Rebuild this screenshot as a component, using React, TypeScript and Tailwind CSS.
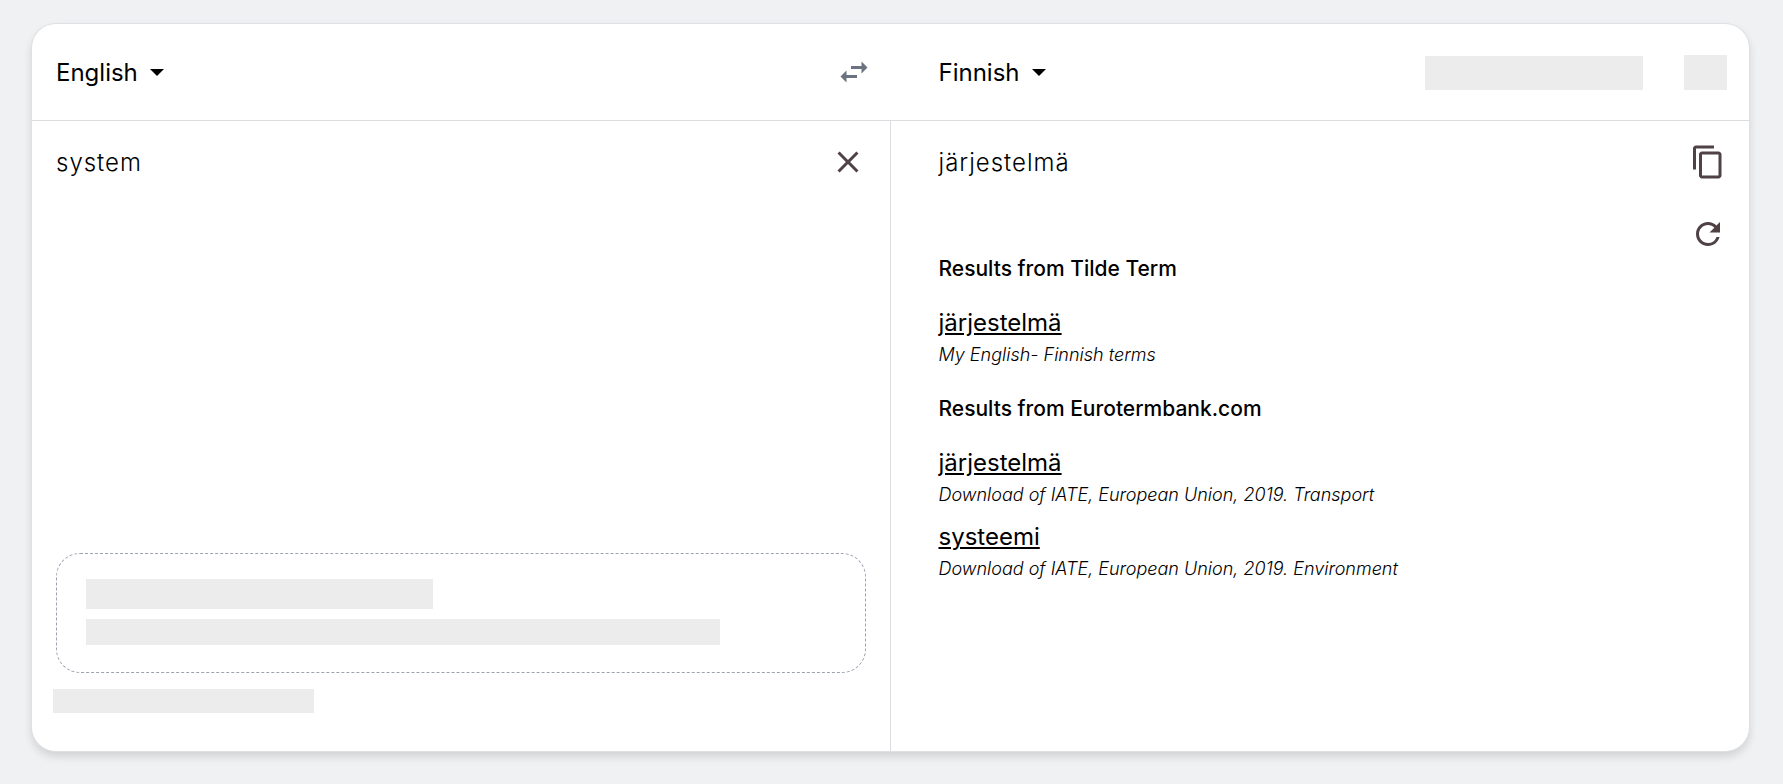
import { MdClose, MdContentCopy, MdRefresh, MdSwapHoriz } from 'react-icons/md';

const languages = ['English', 'Finnish'];

const termGroups = [
  {
    source: 'Tilde Term',
    terms: [{ term: 'järjestelmä', origin: 'My English- Finnish terms' }],
  },
  {
    source: 'Eurotermbank.com',
    terms: [
      { term: 'järjestelmä', origin: 'Download of IATE, European Union, 2019. Transport' },
      { term: 'systeemi', origin: 'Download of IATE, European Union, 2019. Environment' },
    ],
  },
];

function Placeholder({ className }: { className: string }) {
  return <div className={`bg-[#ececec] ${className}`} />;
}

function LanguageSelect({ label, value }: { label: string; value: string }) {
  return (
    <div className="relative flex items-center">
      <select
        aria-label={label}
        defaultValue={value}
        className="appearance-none [field-sizing:content] bg-transparent pt-0.5 pr-[26px] text-2xl text-black outline-none"
      >
        {languages.map((language) => (
          <option key={language}>{language}</option>
        ))}
      </select>
      <svg
        viewBox="0 0 14 7"
        className="absolute right-0 h-[7px] w-3.5 pointer-events-none"
        aria-hidden="true"
      >
        <path d="M0 0h14L7 7z" fill="black" />
      </svg>
    </div>
  );
}

export default function App() {
  return (
    <div className="min-h-screen bg-[#f0f1f3] pt-6 pr-[34px] pb-6 pl-8 font-['Inter',sans-serif] text-black">
      <main className="rounded-3xl bg-white shadow-[0_0_0_1px_#dfe0e3,0_5px_10px_0_rgba(0,0,0,0.14)]">
        {/* Language bar */}
        <header className="grid grid-cols-2 h-[97px] border-b border-[#dcdde0]">
          <div className="flex items-center justify-between pl-6 pr-[19px]">
            <LanguageSelect label="Source language" value="English" />
            <button type="button" aria-label="Swap languages" className="text-[#6b7280]">
              <MdSwapHoriz size={36} />
            </button>
          </div>
          <div className="flex items-center justify-between pl-12 pr-[22px]">
            <LanguageSelect label="Target language" value="Finnish" />
            <div className="flex items-end gap-[41px]">
              <Placeholder className="h-[34px] w-[218px]" />
              <Placeholder className="h-[35px] w-[43px]" />
            </div>
          </div>
        </header>

        <div className="grid grid-cols-2">
          {/* Source text */}
          <section className="flex flex-col border-r border-[#dcdde0] pt-[23px] pr-6 pb-[38px] pl-6">
            <div className="flex items-start">
              <textarea
                aria-label="Source text"
                defaultValue="system"
                rows={1}
                className="grow resize-none bg-transparent text-2xl/[38px] font-light tracking-[1px] outline-none"
              />
              <button type="button" aria-label="Clear text" className="text-[#4f4144]">
                <MdClose size={36} />
              </button>
            </div>

            <div className="mt-auto rounded-3xl border border-dashed border-[#9ca3af] px-[29px] pt-[25px] pb-[27px]">
              <Placeholder className="h-[30px] w-[347px]" />
              <Placeholder className="mt-2.5 h-[26px] w-[634px]" />
            </div>
            <Placeholder className="-ml-[3px] mt-4 h-6 w-[261px]" />
          </section>

          {/* Translation and term results */}
          <section className="flex min-h-[630px] items-start justify-between pt-[23px] pr-[23px] pb-6 pl-12">
            <div>
              <p className="text-2xl/[38px] font-light tracking-[1px]">järjestelmä</p>
              <div className="mt-[73px] space-y-6">
                {termGroups.map((group) => (
                  <div key={group.source}>
                    <h2 className="mb-6 text-[21px]/7 font-medium">Results from {group.source}</h2>
                    <ul className="space-y-2.5">
                      {group.terms.map(({ term, origin }) => (
                        <li key={origin}>
                          <a href="#" className="block w-fit text-2xl/8 underline">
                            {term}
                          </a>
                          <p className="text-lg/8 font-light italic">{origin}</p>
                        </li>
                      ))}
                    </ul>
                  </div>
                ))}
              </div>
            </div>
            <div className="flex flex-col gap-9 text-[#4f4144]">
              <button type="button" aria-label="Copy translation">
                <MdContentCopy size={36} />
              </button>
              <button type="button" aria-label="Translate again">
                <MdRefresh size={36} />
              </button>
            </div>
          </section>
        </div>
      </main>
    </div>
  );
}
